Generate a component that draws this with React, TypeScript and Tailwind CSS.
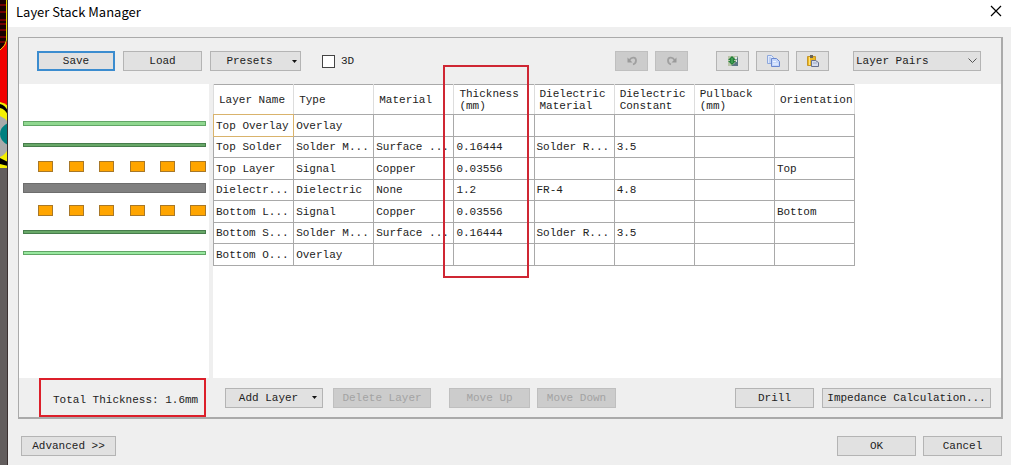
import React from "react";

type ButtonProps = React.ButtonHTMLAttributes<HTMLButtonElement> & { width: string };

function Button({ width, className = "", children, ...rest }: ButtonProps) {
  const tone = rest.disabled
    ? "border-[#bfbfbf] bg-[#cccccc] text-[#a3a3a3]"
    : "border-[#b4b4b4] bg-[#e1e1e1] text-[#222222]";
  return (
    <button
      type="button"
      className={`flex h-5 shrink-0 items-center justify-center border whitespace-nowrap ${tone} ${width} ${className}`}
      {...rest}
    >
      {children}
    </button>
  );
}

function Caret() {
  return (
    <svg width="5" height="3" viewBox="0 0 5 3" aria-hidden="true">
      <path d="M0 0h5L2.5 3z" fill="#111" />
    </svg>
  );
}

function BoardArt() {
  return (
    <svg className="h-full w-full" viewBox="0 0 8 465" preserveAspectRatio="xMinYMin slice" aria-hidden="true">
      <rect width="8" height="465" fill="#625d5d" />
      <rect width="8" height="168" fill="#f00000" />
      <path d="M0 0h7v41L0 50z" fill="#180000" />
      <path d="M0 5h6M0 12h6M0 20h6M0 24h6M0 30h6M0 37h6M0 42h5" stroke="#c40000" />
      <path d="M6.5 0v40Q6 46 0 50" fill="none" stroke="#e8d800" />
      <path d="M0 102Q5 103 8 106V168H0z" fill="#f5f000" />
      <path d="M0 104Q5 105 8 111V115Q5 109 0 108zM0 158L8 162V166L0 164z" fill="#000" />
      <path d="M0 116Q5 118 8 122V149Q5 155 0 157z" fill="#aaa" />
      <path d="M8 123Q0 127 0 134T8 145z" fill="#008080" />
      <path d="M7.5 0V465" stroke="#3a3030" />
    </svg>
  );
}

const padColumns = [38, 69, 99, 130, 160, 190];

function StackDrawing() {
  return (
    <svg width="190" height="181" viewBox="19 84 190 181" role="img" aria-label="Layer stack" shapeRendering="crispEdges">
      <rect x="23.5" y="121.5" width="182" height="4" fill="#90d890" stroke="#61a565" />
      <rect x="23.5" y="143.5" width="182" height="3" fill="#68a868" stroke="#477d4c" />
      <rect x="23.5" y="183.5" width="182" height="9" fill="#808080" stroke="#6d6d6d" />
      <rect x="23.5" y="230.5" width="182" height="3" fill="#68a868" stroke="#477d4c" />
      <rect x="23.5" y="251.5" width="182" height="3" fill="#98e8a0" stroke="#61a565" />
      {[161, 205].map((y) =>
        padColumns.map((x) => (
          <rect key={`${x}-${y}`} x={x + 0.5} y={y + 0.5} width={x === 190 ? 15 : 14} height="10" fill="#ffa500" stroke="#a87828" />
        )),
      )}
    </svg>
  );
}

function UndoIcon({ flip = false }: { flip?: boolean }) {
  return (
    <svg width="12" height="12" viewBox="0 0 12 12" fill="none" className={flip ? "-scale-x-100" : ""} aria-hidden="true">
      <path d="M3.500 5C5.500 1.500 10 2 10 5.500C10 8 8.500 9 7 9.500" stroke="#a0a0a0" strokeWidth="1.800" />
      <path d="M1.500 2.500v5h5z" fill="#9a9a9a" />
    </svg>
  );
}

function ImportIcon() {
  return (
    <svg width="12" height="12" viewBox="0 0 12 12" aria-hidden="true">
      <path d="M1 1h10v10H1z" fill="#b8c4a8" />
      <path d="M11 1v10H4l4-3z" fill="#5b7684" />
      <path d="M8 2h2v2H8zM9 5h1v2H9z" fill="#dfe5ea" />
      <path d="M5 1L9 5H7v1h2L5 10 1 6h2V5H1z" fill="#23803a" />
      <path d="M5 3v5" stroke="#58b868" />
    </svg>
  );
}

function CopyIcon() {
  return (
    <svg width="14" height="12" viewBox="0 0 14 12" aria-hidden="true">
      <path d="M1.500 .5h4l2 2v6h-6z" fill="#dfe9fb" stroke="#8ea8dc" />
      <path d="M3 3h2M3 5h3M3 7h3" stroke="#9db7ea" />
      <path d="M5.500 3.500h5l3 3v5h-8z" fill="#c4d6fa" stroke="#6a88d0" />
      <path d="M7 6.500h3M7 9h5" stroke="#eef4ff" />
    </svg>
  );
}

function PasteIcon() {
  return (
    <svg width="14" height="12" viewBox="0 0 14 12" aria-hidden="true">
      <path d="M1.500 1.500h8v9h-8z" fill="#ecb822" stroke="#c4952b" />
      <path d="M3 2h1v8H3z" fill="#ffe27a" />
      <path d="M4 0h3v3H4z" fill="#6b6558" />
      <path d="M5.500 5.500h4l3 2v4h-7z" fill="#d5dcec" stroke="#66718f" />
      <path d="M7 8h4" stroke="#9aa8c8" />
    </svg>
  );
}

const columns = [
  "Layer Name",
  "Type",
  "Material",
  "Thickness\n(mm)",
  "Dielectric\nMaterial",
  "Dielectric\nConstant",
  "Pullback\n(mm)",
  "Orientation",
];

const layers = [
  ["Top Overlay", "Overlay", "", "", "", "", "", ""],
  ["Top Solder", "Solder M...", "Surface ...", "0.16444", "Solder R...", "3.5", "", ""],
  ["Top Layer", "Signal", "Copper", "0.03556", "", "", "", "Top"],
  ["Dielectr...", "Dielectric", "None", "1.2", "FR-4", "4.8", "", ""],
  ["Bottom L...", "Signal", "Copper", "0.03556", "", "", "", "Bottom"],
  ["Bottom S...", "Solder M...", "Surface ...", "0.16444", "Solder R...", "3.5", "", ""],
  ["Bottom O...", "Overlay", "", "", "", "", "", ""],
];

function LayerTable() {
  return (
    <table className="w-[642px] table-fixed border-collapse border border-[#a9a9a9] text-left">
      <thead>
        <tr className="h-[30px]">
          {columns.map((name) => (
            <th
              key={name}
              scope="col"
              className="border-x border-b border-x-[#dddddd] border-b-[#a9a9a9] p-0 pl-[5px] leading-3 font-normal whitespace-pre"
            >
              {name}
            </th>
          ))}
        </tr>
      </thead>
      <tbody>
        {layers.map((cells, row) => (
          <tr key={cells[0]} className={row % 2 ? "h-[21px]" : "h-[22px]"}>
            {cells.map((cell, col) => (
              <td
                key={col}
                className={`border p-0 pl-0.5 leading-4 whitespace-nowrap ${
                  row === 0 && col === 0 ? "border-double border-[#d9b36c]" : "border-[#a9a9a9]"
                }`}
              >
                {cell}
              </td>
            ))}
          </tr>
        ))}
      </tbody>
    </table>
  );
}

export default function App() {
  return (
    <div className="flex min-h-screen bg-[#efefef] font-['Liberation_Mono',monospace] text-[11px] leading-4 text-[#222222]">
      <aside className="relative w-2 shrink-0 overflow-hidden bg-[#625d5d]">
        <div className="absolute inset-0">
          <BoardArt />
        </div>
      </aside>
      <main className="flex min-w-0 grow flex-col">
        <header className="flex h-[27px] items-start justify-between bg-white pr-[9px] pl-2">
          <h1 className="pt-0.5 font-['Noto_Sans_CJK_SC',sans-serif] text-[13px] leading-5 text-black">Layer Stack Manager</h1>
          <button type="button" aria-label="Close" className="pt-[5px]">
            <svg width="12" height="12" viewBox="0 0 12 12" aria-hidden="true">
              <path d="M1 1l10 10M11 1L1 11" stroke="#000" strokeWidth="1.200" />
            </svg>
          </button>
        </header>

        <section className="mt-2.5 mr-2 ml-2.5 flex grow flex-col border-2 border-t border-l border-[#aaaaaa]">
          <div className="flex h-[46px] shrink-0 items-center gap-2 pr-5 pl-[18px]">
            <button
              type="button"
              className="flex h-5 w-[78px] shrink-0 items-center justify-center border-2 border-[#3b8ccf] bg-[#e1e1e1]"
            >
              Save
            </button>
            <Button width="w-[79px]">Load</Button>
            <Button width="w-[91px]" className="gap-[19px] pl-3">
              Presets <Caret />
            </Button>
            <label className="ml-[13px] flex items-center gap-1.5">
              <input type="checkbox" className="size-[13px] appearance-none border border-[#444444] bg-white checked:bg-[#3b8ccf]" />
              3D
            </label>
            <div className="ml-auto flex gap-[7px]">
              <Button width="w-[33px]" disabled aria-label="Undo">
                <UndoIcon />
              </Button>
              <Button width="w-[33px]" disabled aria-label="Redo">
                <UndoIcon flip />
              </Button>
            </div>
            <div className="ml-5 flex gap-[7px]">
              <Button width="w-[33px]" aria-label="Import">
                <ImportIcon />
              </Button>
              <Button width="w-[33px]" aria-label="Copy">
                <CopyIcon />
              </Button>
              <Button width="w-[33px]" aria-label="Paste">
                <PasteIcon />
              </Button>
            </div>
            <div className="relative ml-4">
              <select
                aria-label="Stack style"
                className="block h-5 w-32 appearance-none border border-[#b4b4b4] bg-[#e1e1e1] px-0.5 leading-4"
              >
                <option>Layer Pairs</option>
              </select>
              <svg className="pointer-events-none absolute top-[7px] right-1" width="9" height="6" viewBox="0 0 9 6" aria-hidden="true">
                <path d="M.5 .5l4 4 4-4" fill="none" stroke="#555" />
              </svg>
            </div>
          </div>

          <div className="flex grow">
            <div className="w-[190px] shrink-0 bg-white">
              <StackDrawing />
            </div>
            <div className="w-1 shrink-0" />
            <div className="grow bg-white">
              <div className="relative w-[642px]">
                <LayerTable />
                <div className="pointer-events-none absolute -top-[19px] left-[230px] h-[213px] w-[86px] border-2 border-[#cf2633]" />
              </div>
            </div>
          </div>

          <div className="flex h-[39px] shrink-0 items-center pr-2.5 pl-5">
            <p className="h-[39px] w-[167px] shrink-0 border-2 border-[#dc1f2a] pt-3 pl-3 whitespace-nowrap">
              Total Thickness: 1.6mm
            </p>
            <Button width="w-[98px]" className="ml-[19px] gap-3.5 pl-2">
              Add Layer <Caret />
            </Button>
            <Button width="w-[98px]" className="ml-2.5" disabled>
              Delete Layer
            </Button>
            <Button width="w-[81px]" className="ml-[18px]" disabled>
              Move Up
            </Button>
            <Button width="w-[79px]" className="ml-[7px]" disabled>
              Move Down
            </Button>
            <Button width="w-[79px]" className="ml-auto">
              Drill
            </Button>
            <Button width="w-[169px]" className="ml-2">
              Impedance Calculation...
            </Button>
          </div>
        </section>

        <footer className="flex gap-[7px] pt-[17px] pr-[9px] pb-[9px] pl-[13px]">
          <Button width="w-[95px]" className="mr-auto">
            Advanced &gt;&gt;
          </Button>
          <Button width="w-[79px]">OK</Button>
          <Button width="w-[79px]">Cancel</Button>
        </footer>
      </main>
    </div>
  );
}
